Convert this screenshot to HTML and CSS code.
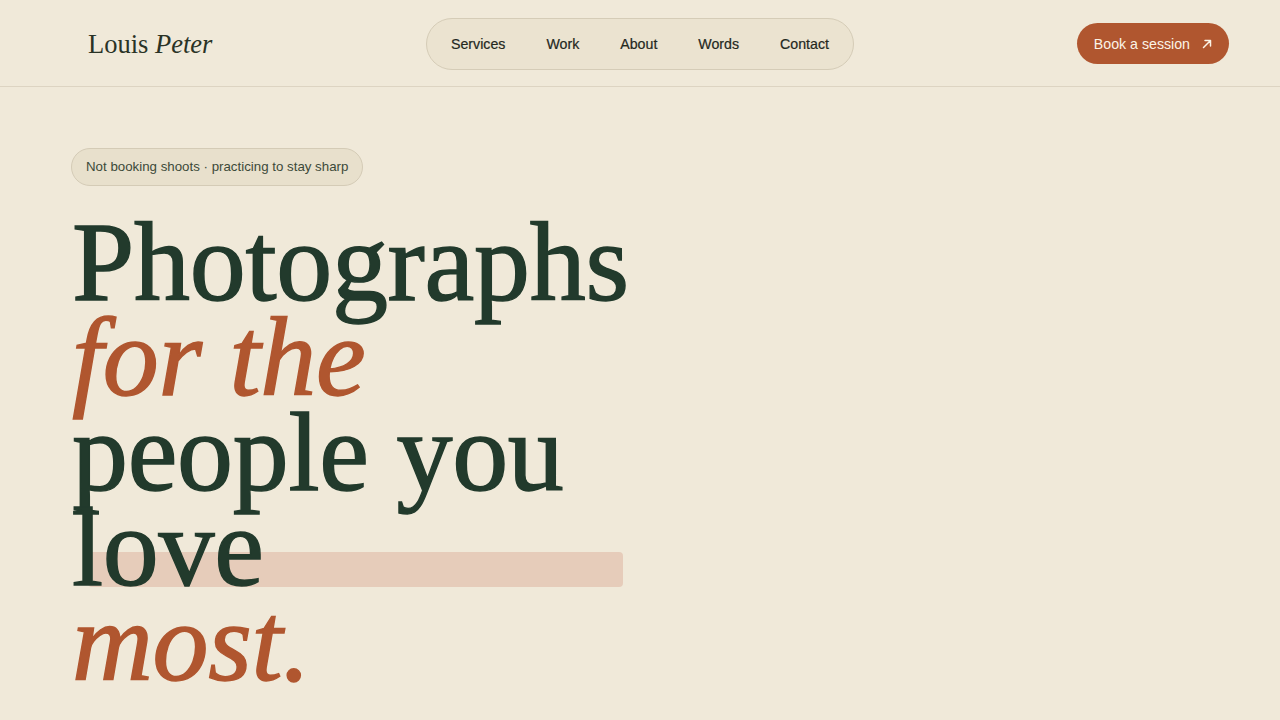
FILE: index.html
```html
<!DOCTYPE html>
<html lang="en">
<head>
<meta charset="utf-8">
<title>Louis Peter — Photographs</title>
<link rel="stylesheet" href="styles.css">
</head>
<body>
<header class="site-header">
  <a class="logo" href="#">Louis <em>Peter</em></a>
  <nav class="nav-pill">
    <a href="#">Services</a>
    <a href="#">Work</a>
    <a href="#">About</a>
    <a href="#">Words</a>
    <a href="#">Contact</a>
  </nav>
  <div class="header-cta">
    <a class="btn-book" href="#">Book a session
      <svg width="10" height="10" viewBox="0 0 10 10" fill="none" stroke="currentColor" stroke-width="1.5" stroke-linecap="round" stroke-linejoin="round"><path d="M1.5 8.5 L8.5 1.5 M3 1.5 H8.5 V7"/></svg>
    </a>
  </div>
</header>
<main class="hero">
  <div class="badge">Not booking shoots · practicing to stay sharp</div>
  <h1 class="headline">
    <span class="line">Photographs</span>
    <span class="line accent">for the</span>
    <span class="line">people you</span>
    <span class="line mark">love</span>
    <span class="line accent">most.</span>
  </h1>
</main>
</body>
</html>
```
FILE: styles.css
```css
* { box-sizing: border-box; }
html, body { margin: 0; padding: 0; }
body {
  background: #f0e9d9;
  color: #223a2c;
  font-family: "Liberation Sans", Arial, sans-serif;
  overflow: hidden;
}
a { text-decoration: none; color: inherit; }

.site-header {
  height: 87px;
  border-bottom: 1px solid #ddd4c2;
  display: grid;
  grid-template-columns: 1fr auto 1fr;
  align-items: center;
  padding: 0 51px;
}
.logo {
  font-family: "Liberation Serif", "Times New Roman", serif;
  font-size: 26.5px;
  color: #2a3326;
  justify-self: start;
  margin: 2px 0 0 37px;
}
.logo em { font-style: italic; }

.nav-pill {
  display: flex;
  align-items: center;
  height: 52px;
  padding: 0 4px;
  border: 1px solid #d5ccb7;
  border-radius: 26px;
  background: #ebe3d0;
  margin-top: 1px;
}
.nav-pill a {
  font-size: 14.2px;
  color: #24281e;
  padding: 0 20.5px;
  line-height: 50px;
  -webkit-text-stroke: 0.2px #24281e;
}
.header-cta { justify-self: end; }
.btn-book {
  display: inline-flex;
  align-items: center;
  gap: 12px;
  height: 41px;
  padding: 0 16px 0 17px;
  border-radius: 21px;
  background: #b0562f;
  color: #fbf3e6;
  font-size: 14.2px;
  margin-top: 1px;
}
.btn-book svg { display: block; margin-right: 1px; }

.hero {
  padding: 61px 72px 0;
}
.badge {
  display: inline-block;
  height: 38px;
  line-height: 36px;
  padding: 0 14px;
  border: 1px solid #d4cbb6;
  border-radius: 19px;
  background: #e8e0cc;
  color: #3c4a39;
  font-size: 13.3px;
  margin-left: -1px;
}
.headline {
  margin: 29px 0 0;
  font-family: "Liberation Serif", "Times New Roman", serif;
  font-weight: 400;
  font-size: 112px;
  line-height: 95px;
  color: #223a2c;
  letter-spacing: -0.3px;
  -webkit-text-stroke: 1.4px #223a2c;
}
.headline .line { display: block; }
.headline .accent {
  font-style: italic;
  color: #b0562f;
  -webkit-text-stroke: 1.4px #b0562f;
}
.headline .mark {
  position: relative;
  z-index: 0;
}
.headline .mark::before {
  content: "";
  position: absolute;
  left: 16px;
  top: 52px;
  width: 535px;
  height: 35px;
  border-radius: 4px;
  background: #e6ccba;
  z-index: -1;
}
```
